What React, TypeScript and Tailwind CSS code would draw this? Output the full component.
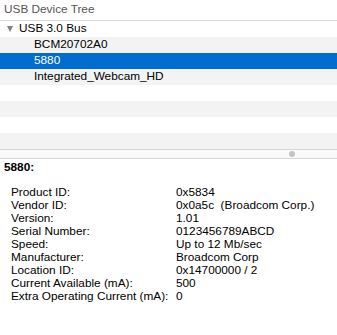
const rows = [
  { label: "USB 3.0 Bus", indent: "pl-[19px]", caret: true },
  { label: "BCM20702A0", indent: "pl-[34px]" },
  { label: "5880", indent: "pl-[34px]", selected: true },
  { label: "Integrated_Webcam_HD", indent: "pl-[34px]" },
  { label: "" },
  { label: "" },
  { label: "" },
  { label: "" },
];

const info: [string, string][] = [
  ["Product ID:", "0x5834"],
  ["Vendor ID:", "0x0a5c  (Broadcom Corp.)"],
  ["Version:", "1.01"],
  ["Serial Number:", "0123456789ABCD"],
  ["Speed:", "Up to 12 Mb/sec"],
  ["Manufacturer:", "Broadcom Corp"],
  ["Location ID:", "0x14700000 / 2"],
  ["Current Available (mA):", "500"],
  ["Extra Operating Current (mA):", "0"],
];

export default function App() {
  return (
    <div
      className="w-[337px] h-[335px] bg-white overflow-hidden text-[11.8px] text-black"
      style={{ fontFamily: '"Liberation Sans", Arial, sans-serif' }}
    >
      <div className="h-[21px] pl-[4px] flex items-center text-[#555] border-b border-[#d9d9d9]">
        USB Device Tree
      </div>

      <div className="flex flex-col">
        {rows.map((r, i) => (
          <div
            key={i}
            className={
              "h-[16px] flex items-center whitespace-pre " +
              (r.selected ? "bg-[#006cd0] text-white " : i % 2 === 1 ? "bg-[#f3f3f3] " : "bg-white ") +
              (r.indent ?? "")
            }
          >
            {r.caret && (
              <svg width="6" height="6" viewBox="0 0 6 6" className="absolute ml-[-12px]">
                <path d="M0 0 H6 L3 6 Z" fill="#808080" />
              </svg>
            )}
            {r.label}
          </div>
        ))}
      </div>

      <div className="h-[10px] border-y border-[#d6d6d6] bg-[#fafafa] flex items-center justify-end pr-[42px]">
        <div className="w-[6px] h-[6px] rounded-full bg-[#c4c4c4]" />
      </div>

      <div className="pl-[4px] pt-[2px] font-bold leading-[13px]">5880:</div>

      <div className="mt-[12px] pl-[11px] leading-[13px]">
        {info.map(([k, v]) => (
          <div key={k} className="flex whitespace-pre">
            <span className="w-[165px] shrink-0">{k}</span>
            <span>{v}</span>
          </div>
        ))}
      </div>
    </div>
  );
}
